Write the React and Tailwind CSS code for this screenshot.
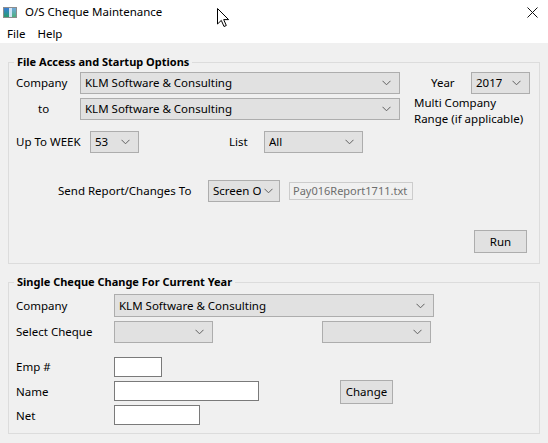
import React from 'react'

const font = { fontFamily: '"Noto Sans", "Liberation Sans", sans-serif' }

const Chevron = () => (
    <svg width="9" height="6" viewBox="0 0 9 6" className="shrink-0">
        <path d="M0.5 0.8 L4.5 4.8 L8.5 0.8" fill="none" stroke="#606060" strokeWidth="1" />
    </svg>
)

// windows style combo box
const Combo = ({ text, className = '' }) => (
    <div className={`flex items-center justify-between border border-[#adadad] bg-[#e1e1e1] pl-[4px] pr-[8px] ${className}`}>
        <span className="whitespace-nowrap overflow-hidden">{text}</span>
        <Chevron />
    </div>
)

const Button = ({ children, className = '' }) => (
    <div className={`flex items-center justify-center border border-[#adadad] bg-[#e1e1e1] ${className}`}>
        {children}
    </div>
)

const TextBox = ({ className = '' }) => (
    <div className={`border border-[#7a7a7a] bg-white ${className}`} />
)

const Group = ({ title, children, className = '' }) => (
    <div className={`mx-[8px] border border-[#dcdcdc] ${className}`}>
        <div className="-mt-[9px] ml-[5px] h-[16px] w-fit bg-[#f0f0f0] px-[3px] text-[11px] font-bold leading-[16px]">{title}</div>
        {children}
    </div>
)

const App = () => {
    return (
        <div className="relative w-[548px] h-[443px] bg-[#f0f0f0] text-[11.5px] text-black overflow-hidden" style={font}>
            {/* Title bar */}
            <div className="flex h-[24px] items-center bg-white">
                <div className="ml-[3px] flex h-[11px] w-[14px] border border-[#8c8c8c] bg-white">
                    <div className="w-[5px] bg-gradient-to-b from-[#3a7bd5] to-[#2c9b6b]" />
                    <div className="w-[3px] bg-[#cfe3f5]" />
                    <div className="flex-1 bg-gradient-to-b from-[#6fa8dc] to-[#4caf7d]" />
                </div>
                <span className="ml-[8px] leading-[16px]">O/S Cheque Maintenance</span>
                <div className="flex-1" />
                <svg width="11" height="11" viewBox="0 0 11 11" className="mr-[10px]">
                    <path d="M0.5 0.5 L10.5 10.5 M10.5 0.5 L0.5 10.5" stroke="#111" strokeWidth="1" />
                </svg>
            </div>

            {/* Menu */}
            <div className="flex h-[19px] items-center bg-white pl-[7px]">
                <span>File</span>
                <span className="ml-[12px]">Help</span>
            </div>

            {/* File Access group */}
            <Group title="File Access and Startup Options" className="mt-[19px] pb-[10px]">
                <div className="mt-[2px] flex h-[48px] items-start pl-[7px]">
                    <div>
                        <div className="flex h-[22px] items-center">
                            <span className="w-[64px]">Company</span>
                            <Combo text="KLM Software & Consulting" className="h-[22px] w-[320px]" />
                        </div>
                        <div className="mt-[4px] flex h-[22px] items-center">
                            <span className="w-[64px] pl-[22px]">to</span>
                            <Combo text="KLM Software & Consulting" className="h-[22px] w-[320px]" />
                        </div>
                    </div>
                    <div className="ml-[14px]">
                        <div className="flex h-[22px] items-center">
                            <span className="w-[57px] pl-[17px]">Year</span>
                            <Combo text="2017" className="h-[22px] w-[59px]" />
                        </div>
                        <div className="mt-[1px] leading-[16px]">
                            Multi Company<br />Range (if applicable)
                        </div>
                    </div>
                </div>

                <div className="mt-[11px] flex h-[22px] items-center pl-[7px]">
                    <span className="w-[74px]">Up To WEEK</span>
                    <Combo text="53" className="h-[22px] w-[49px]" />
                    <span className="ml-[90px] w-[35px]">List</span>
                    <Combo text="All" className="h-[22px] w-[99px]" />
                </div>

                <div className="mt-[27px] flex h-[22px] items-center pl-[49px]">
                    <span className="w-[150px] whitespace-nowrap">Send Report/Changes To</span>
                    <Combo text="Screen O" className="h-[22px] w-[72px] !pr-[6px]" />
                    <div className="ml-[9px] flex h-[18px] w-[124px] items-center overflow-hidden whitespace-nowrap border border-[#cccccc] bg-[#f0f0f0] pl-[3px] text-[11px] text-[#6d6d6d]">
                        Pay016Report1711.txt
                    </div>
                </div>

                <div className="mt-[28px] flex justify-end pr-[12px]">
                    <Button className="h-[23px] w-[53px]">Run</Button>
                </div>
            </Group>

            {/* Single cheque group */}
            <Group title="Single Cheque Change For Current Year" className="mt-[18px] pb-[8px]">
                <div className="mt-[4px] flex h-[23px] items-center pl-[7px]">
                    <span className="w-[98px]">Company</span>
                    <Combo text="KLM Software & Consulting" className="h-[23px] w-[320px]" />
                </div>
                <div className="mt-[4px] flex h-[22px] items-center pl-[7px]">
                    <span className="w-[98px]">Select Cheque</span>
                    <Combo text="" className="h-[22px] w-[99px]" />
                    <Combo text="" className="ml-[109px] h-[22px] w-[109px]" />
                </div>
                <div className="mt-[14px] flex h-[20px] items-center pl-[7px]">
                    <span className="w-[98px]">Emp #</span>
                    <TextBox className="h-[20px] w-[48px]" />
                </div>
                <div className="mt-[4px] flex h-[20px] items-start pl-[7px]">
                    <span className="w-[98px] leading-[22px]">Name</span>
                    <TextBox className="h-[20px] w-[145px]" />
                    <Button className="-mt-[1px] ml-[81px] h-[24px] w-[53px]">Change</Button>
                </div>
                <div className="mt-[4px] flex h-[20px] items-start pl-[7px]">
                    <span className="w-[98px] leading-[22px]">Net</span>
                    <TextBox className="h-[20px] w-[86px]" />
                </div>
            </Group>

            {/* mouse pointer over the title bar */}
            <svg width="13" height="20" viewBox="0 0 13 20" className="absolute left-[217px] top-[8px]">
                <path d="M0.5 0.5 L0.5 16 L4.3 12.4 L7 18.5 L9.3 17.5 L6.7 11.6 L11.6 11.6 Z" fill="white" stroke="black" strokeWidth="1" strokeLinejoin="miter" />
            </svg>
        </div>
    )
}

export default App
